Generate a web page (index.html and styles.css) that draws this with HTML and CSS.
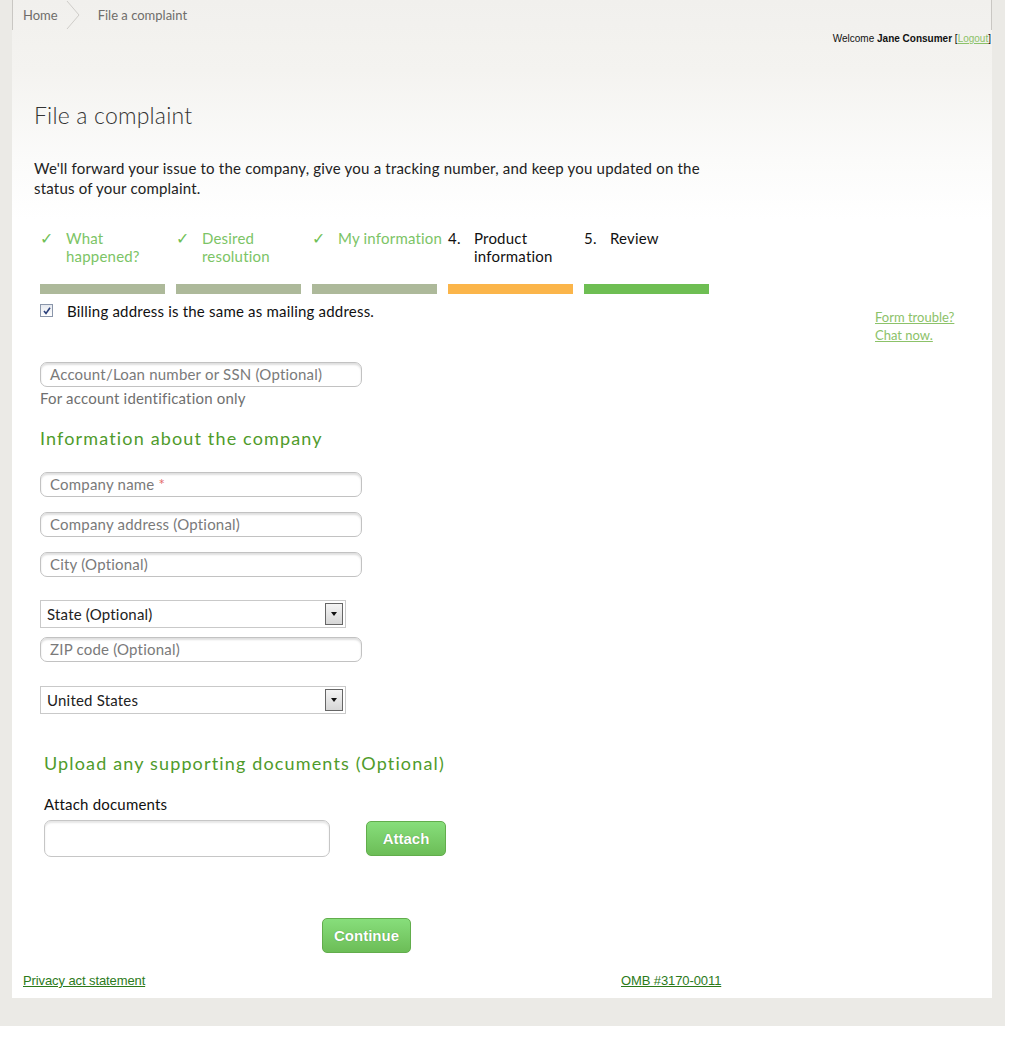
FILE: index.html
```html
<!DOCTYPE html>
<html lang="en">
<head>
<meta charset="utf-8">
<title>File a complaint</title>
<link rel="stylesheet" href="styles.css">
</head>
<body>
<div class="outer">
  <div class="panel">
    <nav class="crumbs">
      <a class="crumb" href="#">Home</a>
      <svg class="sep" width="16" height="30" viewBox="0 0 16 30"><path d="M1 1 L13 15 L1 29" fill="none" stroke="#cfcdc9" stroke-width="1"/></svg>
      <span class="crumb current">File a complaint</span>
    </nav>
    <div class="welcome">Welcome <b>Jane Consumer</b> [<a href="#">Logout</a>]</div>

    <h1 class="title">File a complaint</h1>
    <p class="intro">We'll forward your issue to the company, give you a tracking number, and keep you updated on the status of your complaint.</p>

    <ol class="steps">
      <li class="step done"><span class="mark">✓</span><span class="label">What happened?</span></li>
      <li class="step done"><span class="mark">✓</span><span class="label">Desired resolution</span></li>
      <li class="step done"><span class="mark">✓</span><span class="label">My information</span></li>
      <li class="step current"><span class="mark">4.</span><span class="label">Product information</span></li>
      <li class="step todo"><span class="mark">5.</span><span class="label">Review</span></li>
    </ol>

    <div class="body-row">
      <form class="form">
        <label class="check-row">
          <span class="checkbox"><svg width="8" height="8" viewBox="0 0 8 8"><path d="M1 4 L3 6.5 L7 0.8" fill="none" stroke="#2a3f7a" stroke-width="1.6"/></svg></span>
          <span>Billing address is the same as mailing address.</span>
        </label>

        <div class="field first">Account/Loan number or SSN (Optional)</div>
        <div class="hint">For account identification only</div>

        <h2 class="section">Information about the company</h2>
        <div class="field mt22">Company name <span class="req">*</span></div>
        <div class="field mt15">Company address (Optional)</div>
        <div class="field mt15">City (Optional)</div>

        <div class="select mt23"><span>State (Optional)</span><span class="arrow"></span></div>
        <div class="field mt9">ZIP code (Optional)</div>
        <div class="select mt24"><span>United States</span><span class="arrow"></span></div>

        <div class="upload">
          <h2 class="section">Upload any supporting documents (Optional)</h2>
          <div class="attach-label">Attach documents</div>
          <div class="attach-row">
            <div class="file-box"></div>
            <button type="button" class="btn">Attach</button>
          </div>
        </div>

        <div class="continue-row"><button type="button" class="btn continue">Continue</button></div>
      </form>
      <aside class="help">
        <a href="#">Form trouble?</a>
        <a href="#">Chat now.</a>
      </aside>
    </div>

    <footer class="foot">
      <span class="foot-left"><a href="#">Privacy act statement</a></span>
      <span><a href="#">OMB #3170-0011</a></span>
    </footer>
  </div>
</div>
</body>
</html>
```

FILE: styles.css
```css
html, body {
  margin: 0;
  padding: 0;
  background: #ffffff;
}

body {
  font-family: "Lato", "Open Sans", sans-serif;
  color: #222;
}

.outer {
  width: 1005px;
  background: #ebeae6;
  padding-bottom: 28px;
}

.panel {
  margin-left: 12px;
  width: 980px;
  padding-bottom: 9px;
  background: linear-gradient(#f1f0ed 0px, #f4f3f0 70px, #fbfbfa 160px, #ffffff 220px);
}

/* breadcrumbs */
.crumbs {
  height: 30px;
  display: flex;
  align-items: center;
  border-left: 1px solid #c9c7c3;
  border-right: 1px solid #c9c7c3;
  font-size: 13px;
}
.crumb {
  color: #6f6d6a;
  text-decoration: none;
}
.crumbs .crumb:first-child {
  margin-left: 10px;
}
.sep {
  margin-left: 8px;
  margin-right: 16px;
}

.welcome {
  margin-top: 2px;
  height: 14px;
  line-height: 14px;
  font-family: "Liberation Sans", Arial, sans-serif;
  font-size: 10px;
  color: #111;
  text-align: right;
  padding-right: 1px;
}
.welcome a {
  color: #8cc269;
}

.title {
  margin: 55px 0 0 22px;
  font-size: 23px;
  line-height: 28px;
  font-weight: 300;
  letter-spacing: 0.2px;
  color: #333;
}

.intro {
  margin: 29px 0 0 22px;
  width: 672px;
  font-size: 15px;
  letter-spacing: 0.2px;
  line-height: 20px;
  color: #222;
}

/* steps */
.steps {
  list-style: none;
  margin: 31px 0 0 28px;
  padding: 0;
  display: grid;
  grid-template-columns: repeat(5, 125px);
  column-gap: 11px;
}
.step {
  display: flex;
  font-size: 15px;
  letter-spacing: 0.2px;
  line-height: 18px;
  height: 55px;
  border-bottom: 10px solid #adb99a;
}
.step .mark {
  width: 26px;
  flex: none;
}
.step .label {
  width: 108px;
  flex: none;
}
.step.done {
  color: #7cc466;
}
.step.done .mark {
  color: #6fbf57;
  font-size: 16px;
}
.step.current {
  color: #111;
  border-bottom-color: #fbb54a;
}
.step.todo {
  color: #111;
  border-bottom-color: #6ebe53;
}

/* body */
.body-row {
  display: flex;
}
.form {
  margin-left: 28px;
  width: 700px;
}
.check-row {
  margin-top: 8px;
  display: flex;
  align-items: center;
  font-size: 15px;
  letter-spacing: 0.2px;
  line-height: 18px;
  color: #111;
}
.checkbox {
  width: 11px;
  height: 11px;
  border: 1px solid #8a96aa;
  background: linear-gradient(#e6e9ef, #ffffff);
  display: flex;
  align-items: center;
  justify-content: center;
  margin-right: 14px;
  margin-top: -1px;
}

.field {
  box-sizing: border-box;
  width: 322px;
  height: 25px;
  border: 1px solid #c2c2c2;
  border-radius: 7px;
  box-shadow: inset 0 2px 2px rgba(0, 0, 0, 0.13);
  padding-left: 9px;
  font-size: 15px;
  letter-spacing: 0.2px;
  line-height: 23px;
  color: #7a7a7a;
  background: #fff;
}
.field.first { margin-top: 42px; }
.mt22 { margin-top: 22px; }
.mt15 { margin-top: 15px; }
.mt9 { margin-top: 9px; }
.mt23 { margin-top: 23px; }
.mt24 { margin-top: 24px; }
.req { color: #e36a6a; }

.hint {
  margin-top: 2px;
  font-size: 15px;
  letter-spacing: 0.2px;
  line-height: 18px;
  color: #6f6f6f;
}

.section {
  margin: 19px 0 0 0;
  font-size: 18px;
  line-height: 24px;
  font-weight: 400;
  letter-spacing: 1.15px;
  color: #4f9b2b;
}

.select {
  box-sizing: border-box;
  width: 306px;
  height: 28px;
  border: 1px solid #c9c9c9;
  display: flex;
  align-items: center;
  justify-content: space-between;
  padding: 0 2px 0 6px;
  font-size: 15px;
  letter-spacing: 0.2px;
  color: #222;
  background: #fff;
}
.arrow {
  box-sizing: border-box;
  width: 18px;
  height: 22px;
  border: 1px solid #666;
  background: linear-gradient(#f4f4f4, #d6d6d6);
  position: relative;
}
.arrow::after {
  content: "";
  position: absolute;
  left: 5px;
  top: 8px;
  border-left: 3px solid transparent;
  border-right: 3px solid transparent;
  border-top: 4px solid #111;
}

.upload {
  margin-left: 4px;
}
.upload .section {
  margin-top: 37px;
}
.attach-label {
  margin-top: 20px;
  font-size: 15px;
  letter-spacing: 0.2px;
  line-height: 18px;
  color: #111;
}
.attach-row {
  margin-top: 7px;
  display: flex;
  align-items: center;
}
.file-box {
  box-sizing: border-box;
  width: 286px;
  height: 37px;
  border: 1px solid #c6c6c6;
  border-radius: 7px;
  box-shadow: inset 0 2px 2px rgba(0, 0, 0, 0.1);
}

.btn {
  box-sizing: border-box;
  height: 35px;
  padding: 0;
  border: 1px solid #62ad4c;
  border-radius: 5px;
  background: linear-gradient(#87de7b, #6cbd57);
  color: #fff;
  font-family: "Liberation Sans", Arial, sans-serif;
  font-weight: bold;
  font-size: 15px;
  text-shadow: 0 0 1px rgba(40, 100, 30, 0.6);
}
.attach-row .btn {
  margin-left: 36px;
  width: 80px;
}
.continue-row {
  margin-top: 61px;
  padding-left: 282px;
}
.btn.continue {
  width: 89px;
}

.help {
  margin-top: 14px;
  margin-left: 135px;
  display: flex;
  flex-direction: column;
  font-size: 13px;
  line-height: 18px;
}
.help a {
  color: #8cc269;
}

.foot {
  margin-top: 20px;
  padding-left: 11px;
  display: grid;
  grid-template-columns: 598px auto;
  font-family: "Liberation Sans", Arial, sans-serif;
  font-size: 13px;
  line-height: 16px;
  letter-spacing: -0.1px;
}
.foot a {
  color: #2c7a1a;
}
```
